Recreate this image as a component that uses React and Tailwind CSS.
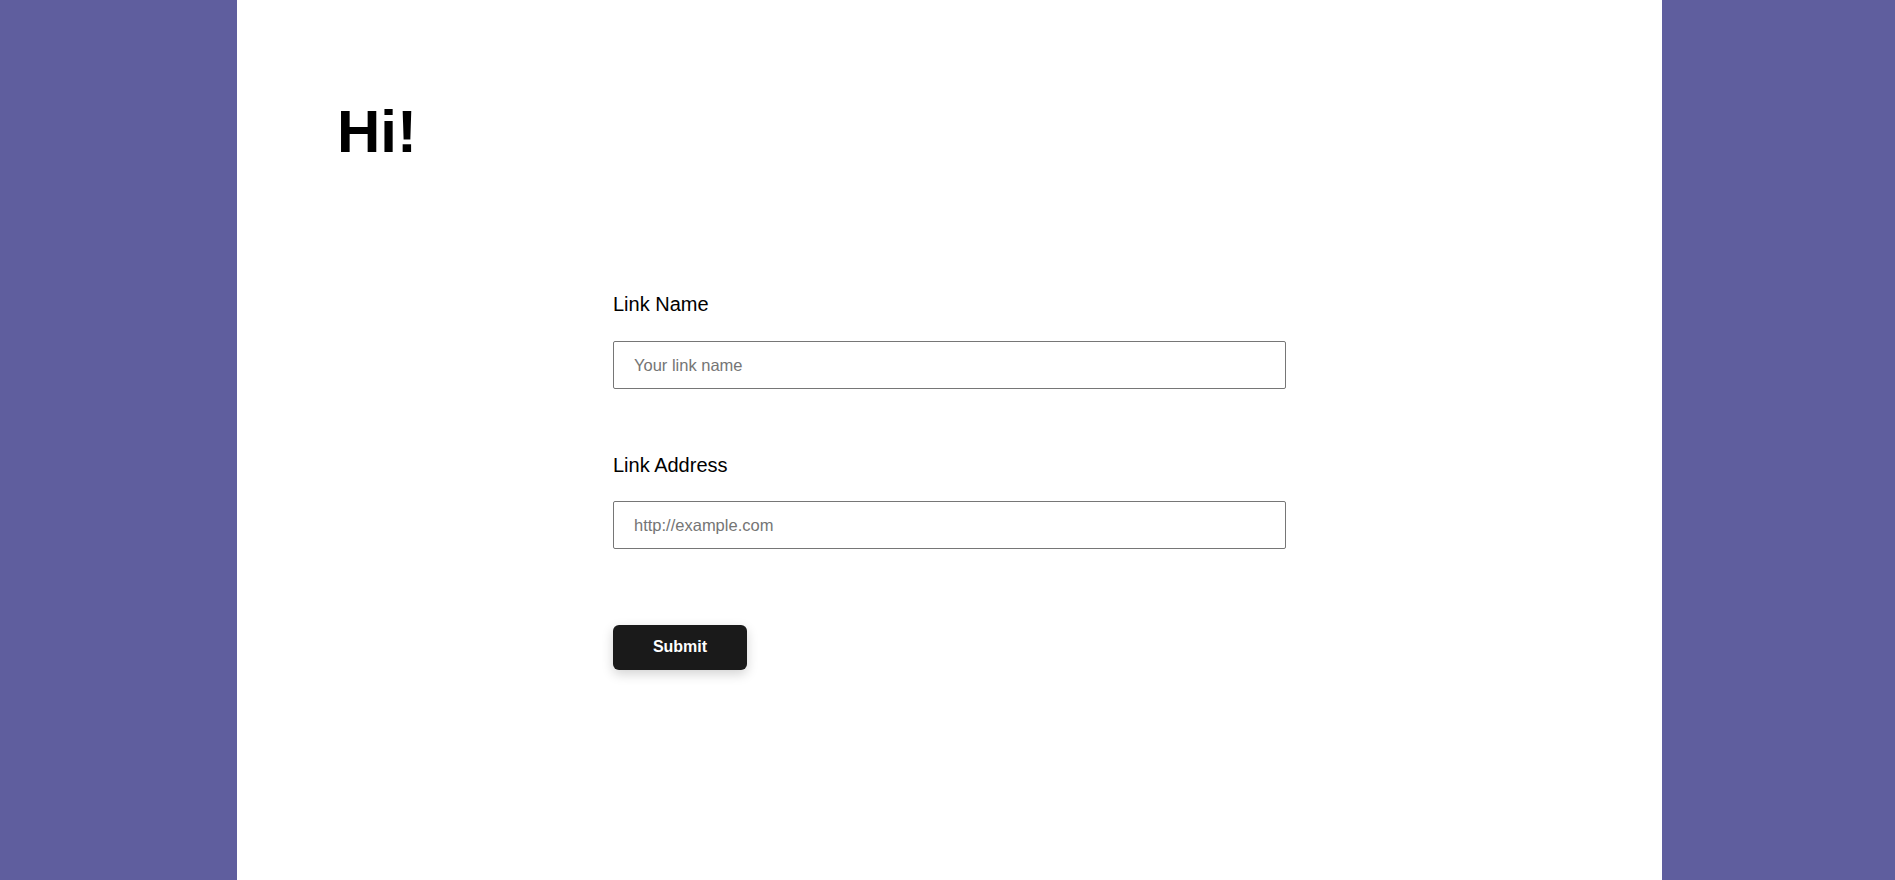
export default function App() {
  return (
    <div className="min-h-screen w-full bg-[#5f5e9e] font-['Liberation_Sans',Arial,sans-serif]">
      <div className="ml-[237px] w-[1425px] min-h-[880px] bg-white pt-[102px] pl-[100px]">
        <h1 className="text-[60px] leading-[60px] font-bold text-black">Hi!</h1>
        <form className="ml-[276px] mt-[131px] flex flex-col w-[673px]" onSubmit={(e) => e.preventDefault()}>
          <label className="block text-[20px] leading-[23px] text-black">Link Name</label>
          <input
            type="text"
            placeholder="Your link name"
            className="mt-[25px] h-[48px] w-[673px] border border-[#767676] rounded-[2px] pl-[20px] text-[16.5px] text-black placeholder:text-[#757575] outline-none font-['Liberation_Sans',Arial,sans-serif]"
          />
          <label className="block mt-[65px] text-[20px] leading-[23px] text-black">Link Address</label>
          <input
            type="text"
            placeholder="http://example.com"
            className="mt-[24px] h-[48px] w-[673px] border border-[#767676] rounded-[2px] pl-[20px] text-[16.5px] text-black placeholder:text-[#757575] outline-none font-['Liberation_Sans',Arial,sans-serif]"
          />
          <button
            type="submit"
            className="mt-[76px] w-[134px] h-[45px] rounded-[6px] bg-[#1a1a1a] text-white font-bold text-[16px] pb-[2px] shadow-[0_4px_12px_rgba(0,0,0,0.18)] font-['Liberation_Sans',Arial,sans-serif]"
          >
            Submit
          </button>
        </form>
      </div>
    </div>
  );
}
